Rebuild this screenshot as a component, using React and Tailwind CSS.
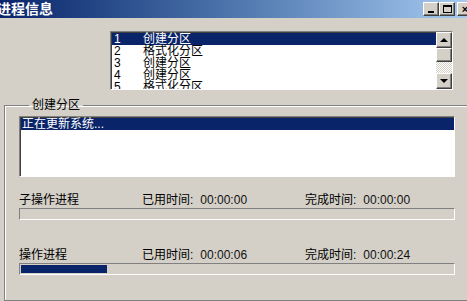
import React from "react";

const font = { fontFamily: '"Liberation Sans", "Noto Sans CJK SC", sans-serif' };

const steps = [
  { n: "1", name: "创建分区", active: true },
  { n: "2", name: "格式化分区" },
  { n: "3", name: "创建分区" },
  { n: "4", name: "创建分区" },
  { n: "5", name: "格式化分区" },
];

const Raised = ({ className = "", children }) => (
  <div
    className={`bg-[#d4d0c8] border border-t-white border-l-white border-r-[#404040] border-b-[#404040] shadow-[inset_-1px_-1px_0_#808080] flex items-center justify-center ${className}`}
  >
    {children}
  </div>
);

const Progress = ({ value }) => (
  <div className="h-[12px] border border-t-[#808080] border-l-[#808080] border-r-white border-b-white p-[1px] flex">
    {value > 0 && <div className="h-full bg-[#0a246a]" style={{ width: `${value}%` }} />}
  </div>
);

const Row = ({ label, used, done, value, className = "" }) => (
  <div className={className}>
    <div className="flex text-[12px] leading-[14px] text-black">
      <span className="w-[123px]">{label}</span>
      <span className="w-[163px]">
        已用时间:<span className="ml-[7px] text-[#111]">{used}</span>
      </span>
      <span>
        完成时间:<span className="ml-[7px] text-[#111]">{done}</span>
      </span>
    </div>
    <div className="mt-[1px]">
      <Progress value={value} />
    </div>
  </div>
);

export default function App() {
  return (
    <div className="w-[467px] h-[301px] overflow-hidden bg-[#d4d0c8] flex flex-col" style={font}>
      {/* title bar */}
      <div className="h-[18px] shrink-0 flex items-center bg-gradient-to-r from-[#0a246a] via-[#4f76ad] to-[#a6caf0]">
        <span className="-ml-[3px] text-white font-bold text-[14px] leading-none flex-1">进程信息</span>
        <div className="flex items-center mr-[-6px]">
          <Raised className="w-[16px] h-[14px]">
            <div className="w-[6px] h-[2px] bg-black mt-[6px] -ml-[1px]" />
          </Raised>
          <Raised className="w-[16px] h-[14px]">
            <div className="w-[9px] h-[8px] border border-black border-t-2" />
          </Raised>
          <Raised className="w-[16px] h-[14px] ml-[2px] text-[11px] font-bold text-black leading-none">
            ×
          </Raised>
        </div>
      </div>

      {/* step list */}
      <div className="ml-[110px] mt-[13px] w-[343px] h-[59px] shrink-0 flex border border-t-[#808080] border-l-[#808080] border-r-white border-b-white">
        <div className="flex-1 bg-white overflow-hidden shadow-[inset_1px_1px_0_#404040] pt-[1px] pl-[1px]">
          {steps.map((s) => (
            <div
              key={s.n}
              className={`flex h-[12px] text-[12px] leading-[12px] ${s.active ? "bg-[#0a246a] text-white" : "text-black"}`}
            >
              <span className="w-[31px] pl-[2px]">{s.n}</span>
              <span>{s.name}</span>
            </div>
          ))}
        </div>
        <div className="w-[16px] flex flex-col bg-[repeating-conic-gradient(#ffffff_0%_25%,#d4d0c8_0%_50%)] bg-[length:2px_2px]">
          <Raised className="h-[16px] w-[16px]">
            <div className="w-0 h-0 border-x-[4px] border-x-transparent border-b-[4px] border-b-black" />
          </Raised>
          <Raised className="h-[14px] w-[16px]" />
          <div className="flex-1" />
          <Raised className="h-[16px] w-[16px]">
            <div className="w-0 h-0 border-x-[4px] border-x-transparent border-t-[4px] border-t-black" />
          </Raised>
        </div>
      </div>

      {/* group box */}
      <fieldset className="ml-[4px] mt-[8px] w-[460px] flex-1 border border-[#808080] shadow-[inset_1px_1px_0_#fff,1px_1px_0_#fff] px-[14px] pt-0 min-h-0">
        <legend className="ml-[10px] px-[3px] text-[12px] leading-[14px] text-black">创建分区</legend>

        <div className="mt-[4px] h-[61px] border border-t-[#808080] border-l-[#808080] border-r-white border-b-white">
          <div className="h-full bg-white shadow-[inset_1px_1px_0_#404040] pt-[1px] pl-[1px]">
            <div className="h-[12px] bg-[#0a246a] text-white text-[12px] leading-[12px] pl-[1px]">
              正在更新系统...
            </div>
          </div>
        </div>

        <Row className="mt-[16px] w-[436px]" label="子操作进程" used="00:00:00" done="00:00:00" value={0} />
        <Row className="mt-[28px] w-[436px]" label="操作进程" used="00:00:06" done="00:00:24" value={20} />
      </fieldset>
    </div>
  );
}
